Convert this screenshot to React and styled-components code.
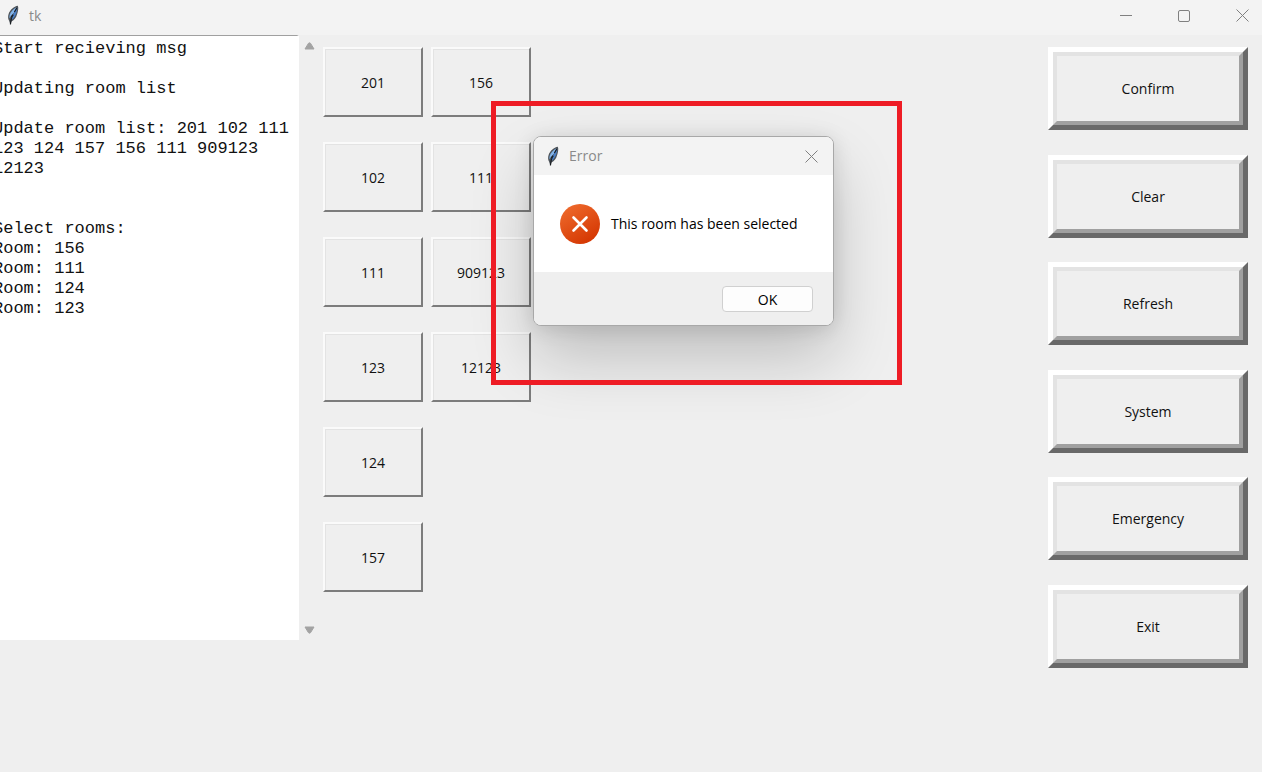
import React from "react";
import styled, { createGlobalStyle } from "styled-components";

const GlobalStyle = createGlobalStyle`
  * { box-sizing: border-box; }
  body {
    margin: 0;
    background: #efefef;
    color: #111;
    font-family: "Open Sans", "Noto Sans", sans-serif;
    font-size: 14px;
  }
  button { font: inherit; color: inherit; }
`;

const AppWindow = styled.div`
  position: relative;
  min-height: 100vh;
  overflow: hidden;
  background: #efefef;
`;

const TitleBar = styled.header`
  display: flex;
  align-items: center;
  height: 35px;
  padding: 0 8px 4px 6px;
  background: #f3f3f3;
  color: #8a8a8a;
`;

const Title = styled.h1`
  margin: 0 0 0 8px;
  flex: 1;
  font-size: 14px;
  font-weight: 400;
  line-height: 20px;
`;

const WindowControls = styled.div`
  display: flex;
  gap: 34px;
`;

const IconButton = styled.button`
  display: flex;
  align-items: center;
  justify-content: center;
  width: 24px;
  height: 24px;
  padding: 0;
  border: 0;
  background: transparent;
  color: #808080;
`;

const Content = styled.main`
  display: flex;
  align-items: flex-start;
`;

const LogPane = styled.section`
  display: flex;
  flex: none;
  width: 319px;
  height: 605px;
`;

const Log = styled.pre`
  flex: 1;
  margin: 0;
  padding: 3px 0;
  border-top: 1px solid #a0a0a0;
  border-right: 2px solid #fff;
  overflow: hidden;
  background: #fff;
  font-family: "Liberation Mono", "Courier New", monospace;
  font-size: 17px;
  line-height: 20px;
`;

const LogText = styled.code`
  display: block;
  margin-left: -7px;
  font: inherit;
`;

const ScrollTrack = styled.div`
  display: flex;
  flex-direction: column;
  align-items: center;
  justify-content: space-between;
  width: 20px;
  padding: 6px 0 5px;
`;

const ScrollButton = styled.button`
  display: flex;
  padding: 0;
  border: 0;
  background: transparent;
`;

const Rooms = styled.section`
  display: grid;
  grid-auto-flow: column;
  grid-template-rows: repeat(6, 70px);
  grid-auto-columns: 100px;
  gap: 25px 8px;
  padding: 12px 4px;
`;

const RoomButton = styled.button`
  padding: 0;
  border: 2px solid;
  border-color: #fafafa #7c7c7c #7c7c7c #fafafa;
  background: #efefef;
  box-shadow: inset 1px 1px #e3e3e3;
`;

const Actions = styled.nav`
  display: flex;
  flex-direction: column;
  justify-content: space-between;
  width: 200px;
  min-height: 621px;
  margin: 12px 14px 12px auto;
`;

const ActionButton = styled.button`
  display: flex;
  height: 83px;
  padding: 0;
  border: 5px solid;
  border-color: #fff #696969 #696969 #fff;
  background: #efefef;
`;

const ActionFace = styled.span`
  display: flex;
  flex: 1;
  align-self: stretch;
  align-items: center;
  justify-content: center;
  border: 4px solid;
  border-color: #e3e3e3 #a0a0a0 #a0a0a0 #e3e3e3;
`;

const Highlight = styled.div`
  position: absolute;
  top: 101px;
  left: 491px;
  width: 411px;
  height: 284px;
  border: 5px solid #ee1c25;
  pointer-events: none;
`;

const Dialog = styled.section`
  position: absolute;
  top: 136px;
  left: 533px;
  width: 301px;
  border: 1px solid #a8a8a8;
  border-radius: 8px;
  background: #fff;
  box-shadow: 0 32px 64px rgba(0, 0, 0, 0.2), 0 2px 20px rgba(0, 0, 0, 0.12);
`;

const DialogBar = styled.header`
  display: flex;
  align-items: center;
  height: 38px;
  padding: 0 10px 0 12px;
  border-radius: 7px 7px 0 0;
  background: #f3f3f3;
  color: #8a8a8a;
`;

const DialogTitle = styled.h2`
  flex: 1;
  margin: 0 0 0 8px;
  font-size: 14px;
  font-weight: 400;
  line-height: 20px;
`;

const DialogBody = styled.div`
  display: flex;
  align-items: center;
  gap: 11px;
  height: 97px;
  padding: 0 26px;
  color: #000;
`;

const Message = styled.p`
  margin: 0;
  white-space: nowrap;
`;

const DialogFooter = styled.footer`
  display: flex;
  justify-content: flex-end;
  padding: 14px 20px 13px;
  border-radius: 0 0 7px 7px;
  background: #efefef;
`;

const OkButton = styled.button`
  width: 91px;
  height: 26px;
  padding: 0;
  border: 1px solid #d0d0d0;
  border-radius: 4px;
  background: #fdfdfd;
  color: #000;
`;

const Feather = () => (
  <svg width="15" height="21" viewBox="0 0 15 21" aria-hidden="true">
    <path d="M11.8 .8 C8 1.4 4.2 4.6 2.6 9 C1.8 11.5 2 14 3 15.5 L4.4 19.8 L5.4 16.5 C8.4 15 10.2 12.5 11 9.5 C12 6.5 12.8 3 11.8 .8Z" fill="#4d5359" />
    <path d="M10.4 2.2 C7.4 3.8 4.8 6.6 3.6 10 L3.3 13.2 L8 7.6Z" fill="#82b4ea" />
    <path d="M11.3 2.8 C11.2 6 9.8 11.4 6.2 14.6 L4.8 13.4 L8.6 7Z" fill="#4a80c8" />
    <path d="M10.8 3 L8.4 7 M7 9.5 C5.6 12 4.7 15 4.4 19.4 M5 11.6 L7.4 10.2" fill="none" stroke="#191d22" strokeWidth="1.2" />
  </svg>
);

const CloseGlyph = () => (
  <svg width="13" height="13" viewBox="0 0 13 13" aria-hidden="true">
    <path d="M.5 .5 12.5 12.5 M12.5 .5 .5 12.5" fill="none" stroke="currentColor" />
  </svg>
);

const MinimizeGlyph = () => (
  <svg width="12" height="12" viewBox="0 0 12 12" aria-hidden="true">
    <path d="M0 5.5H12" stroke="currentColor" />
  </svg>
);

const MaximizeGlyph = () => (
  <svg width="12" height="12" viewBox="0 0 12 12" aria-hidden="true">
    <rect x=".5" y=".5" width="11" height="11" rx="1.5" fill="none" stroke="currentColor" />
  </svg>
);

const Arrow = ({ down }) => (
  <svg width="11" height="9" viewBox="0 0 11 9" aria-hidden="true">
    <path
      d={down ? "M1 1H10L6.6 6.6Q5.5 7.8 4.4 6.6Z" : "M1 8H10L6.6 2.4Q5.5 1.2 4.4 2.4Z"}
      fill="#a3a3a3"
      stroke="#a3a3a3"
      strokeLinejoin="round"
    />
  </svg>
);

const ErrorIcon = () => (
  <svg width="40" height="40" viewBox="0 0 40 40" aria-hidden="true">
    <defs>
      <linearGradient id="error-fill" x1="0.2" y1="0" x2="0.8" y2="1">
        <stop offset="0" stopColor="#ee6a2c" />
        <stop offset="1" stopColor="#d33400" />
      </linearGradient>
    </defs>
    <circle cx="20" cy="20" r="20" fill="url(#error-fill)" />
    <path d="M13.5 13.5 26.5 26.5 M26.5 13.5 13.5 26.5" fill="none" stroke="#fff" strokeWidth="2.6" strokeLinecap="round" />
  </svg>
);

const logText = `Start recieving msg

Updating room list

Update room list: 201 102 111
123 124 157 156 111 909123
12123


Select rooms:
Room: 156
Room: 111
Room: 124
Room: 123`;

const rooms = ["201", "102", "111", "123", "124", "157", "156", "111", "909123", "12123"];
const actions = ["Confirm", "Clear", "Refresh", "System", "Emergency", "Exit"];

export default function App() {
  return (
    <>
      <GlobalStyle />
      <AppWindow>
        <TitleBar>
          <Feather />
          <Title>tk</Title>
          <WindowControls>
            <IconButton aria-label="Minimize"><MinimizeGlyph /></IconButton>
            <IconButton aria-label="Maximize"><MaximizeGlyph /></IconButton>
            <IconButton aria-label="Close"><CloseGlyph /></IconButton>
          </WindowControls>
        </TitleBar>
        <Content>
          <LogPane>
            <Log><LogText>{logText}</LogText></Log>
            <ScrollTrack>
              <ScrollButton aria-label="Scroll up"><Arrow /></ScrollButton>
              <ScrollButton aria-label="Scroll down"><Arrow down /></ScrollButton>
            </ScrollTrack>
          </LogPane>
          <Rooms>
            {rooms.map((room, i) => <RoomButton key={i}>{room}</RoomButton>)}
          </Rooms>
          <Actions>
            {actions.map((label) => (
              <ActionButton key={label}><ActionFace>{label}</ActionFace></ActionButton>
            ))}
          </Actions>
        </Content>
        <Dialog role="alertdialog" aria-labelledby="dialog-title" aria-describedby="dialog-message">
          <DialogBar>
            <Feather />
            <DialogTitle id="dialog-title">Error</DialogTitle>
            <IconButton aria-label="Close dialog"><CloseGlyph /></IconButton>
          </DialogBar>
          <DialogBody>
            <ErrorIcon />
            <Message id="dialog-message">This room has been selected</Message>
          </DialogBody>
          <DialogFooter>
            <OkButton>OK</OkButton>
          </DialogFooter>
        </Dialog>
        <Highlight />
      </AppWindow>
    </>
  );
}
